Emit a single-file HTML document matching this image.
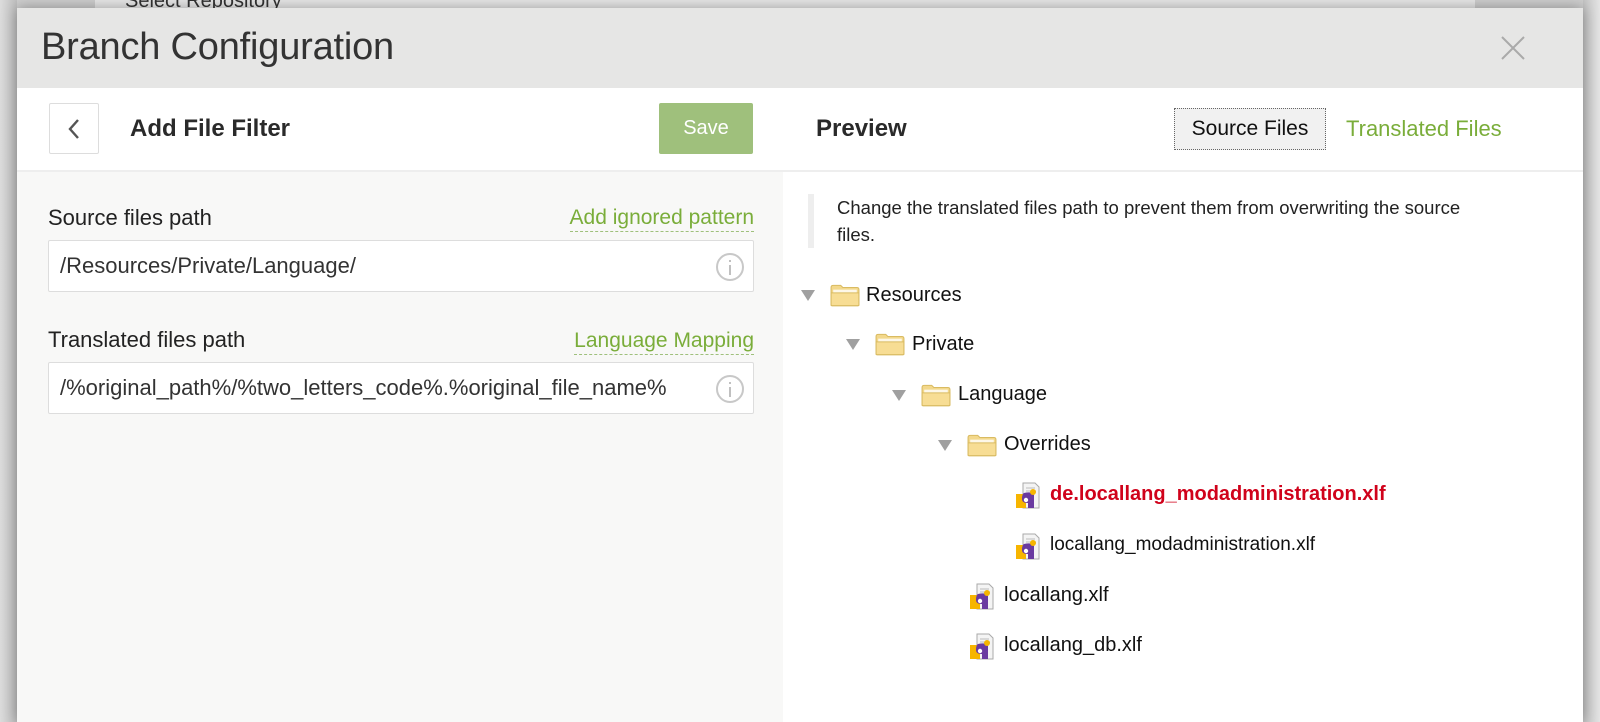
<!DOCTYPE html>
<html><head><meta charset="utf-8"><style>
*{box-sizing:border-box;margin:0;padding:0}
body{width:1600px;height:722px;overflow:hidden;background:#cfcfcf;font-family:"Liberation Sans","DejaVu Sans",sans-serif;color:#222;position:relative}
.back{position:absolute;left:95px;top:-20px;width:1380px;height:60px;background:#e9e9e9;}
.back span{position:absolute;left:30px;top:10px;font-size:20px;color:#333}
.edgeL{position:absolute;left:0;top:0;width:17px;height:722px;background:linear-gradient(90deg,#dcdcdc,#c0c0c0)}
.edgeR{position:absolute;right:0;top:0;width:17px;height:722px;background:linear-gradient(270deg,#e4e4e4,#c4c4c4)}
.modal{position:absolute;left:17px;top:8px;width:1566px;height:714px;background:#fff;box-shadow:0 0 14px rgba(0,0,0,.35)}
.hdr{position:absolute;left:0;top:0;width:100%;height:80px;background:#e6e6e5}
.hdr h1{position:absolute;left:24px;top:18px;font-weight:300;font-size:38px;color:#333;letter-spacing:-.2px}
.close{position:absolute;right:58px;top:28px}
.bar{position:absolute;left:0;top:80px;width:100%;height:84px;background:#fff;border-bottom:2px solid #eee}
.backbtn{position:absolute;left:32px;top:15px;width:50px;height:51px;border:1px solid #ddd;border-radius:2px;background:#fff}
.t1{position:absolute;left:113px;top:27px;font-size:24px;font-weight:bold;color:#2a2a2a}
.save{position:absolute;left:642px;top:15px;width:94px;height:51px;background:#9fc07c;color:#fff;font-size:20px;text-align:center;line-height:51px;border-radius:2px}
.prev{position:absolute;left:799px;top:27px;font-size:24px;font-weight:bold;color:#2a2a2a}
.src{position:absolute;left:1157px;top:20px;width:152px;height:42px;background:#f1f1f1;border:1px dotted #666;font-size:21px;text-align:center;line-height:40px;color:#111}
.trn{position:absolute;left:1329px;top:28px;font-size:22px;color:#7aad3a}
.left{position:absolute;left:0;top:164px;width:766px;height:550px;background:#f8f8f7}
.lbl{position:absolute;left:31px;font-size:22px;color:#222}
.lnk{position:absolute;right:29px;font-size:21px;color:#7aad3a;border-bottom:1px dashed #9fc07c;padding-bottom:1px}
.inp{position:absolute;left:31px;width:706px;height:52px;background:#fff;border:1px solid #ddd;border-radius:2px;font-size:22px;line-height:50px;padding-left:11px;color:#333}
.info{position:absolute;right:9px;top:12px;width:28px;height:28px;border:2px solid #c8c8c8;border-radius:50%}
.info:before{content:"";position:absolute;left:11px;top:5px;width:2px;height:2px;background:#c0c0c0}
.info:after{content:"";position:absolute;left:11px;top:10px;width:2px;height:10px;background:#c0c0c0}
.note{position:absolute;left:791px;top:186px;width:700px;border-left:6px solid #eee;padding-left:23px;padding-right:20px;font-size:18.5px;line-height:27px;color:#222}
.row{position:absolute;font-size:20px;color:#111;height:30px;line-height:30px;white-space:nowrap}
.tri{position:absolute;width:0;height:0;border-left:7px solid transparent;border-right:7px solid transparent;border-top:11px solid #a0a0a0}
.fold{position:absolute;width:30px;height:24px}
.fi{position:absolute;width:26px;height:28px}
</style></head><body>
<div class="back"><span>Select Repository</span></div>
<div class="edgeL"></div><div class="edgeR"></div>
<div class="modal">
 <div class="hdr"><h1>Branch Configuration</h1>
  <svg class="close" width="24" height="24" viewBox="0 0 24 24"><path d="M1 1L23 23M23 1L1 23" stroke="#aaa" stroke-width="2"/></svg></div>
 <div class="bar">
  <div class="backbtn"><svg width="50" height="51" viewBox="0 0 50 51"><path d="M28 16L20 25L28 34" fill="none" stroke="#555" stroke-width="2.4"/></svg></div>
  <div class="t1">Add File Filter</div>
  <div class="save">Save</div>
  <div class="prev">Preview</div>
  <div class="src">Source Files</div>
  <div class="trn">Translated Files</div>
 </div>
 <div class="left">
  <div class="lbl" style="top:33px">Source files path</div>
  <div class="lnk" style="top:34px">Add ignored pattern</div>
  <div class="inp" style="top:68px">/Resources/Private/Language/<div class="info"></div></div>
  <div class="lbl" style="top:155px">Translated files path</div>
  <div class="lnk" style="top:157px">Language Mapping</div>
  <div class="inp" style="top:190px">/%original_path%/%two_letters_code%.%original_file_name%<div class="info"></div></div>
 </div>
 <div class="note">Change the translated files path to prevent them from overwriting the source files.</div>
</div>
<svg width="0" height="0" style="position:absolute"><defs>
<symbol id="fd" viewBox="0 0 28 22"><path d="M1 4Q1 2 3 2H10L12 4H25Q27 4 27 6V20Q27 21 26 21H2Q1 21 1 20Z" fill="#f3d88b" stroke="#d9bb62"/><rect x="3" y="6" width="22" height="3" fill="#fff" opacity=".8"/><path d="M1 9H27V20Q27 21 26 21H2Q1 21 1 20Z" fill="#f7dd94" stroke="#d9bb62"/></symbol>
<symbol id="fl" viewBox="0 0 26 28"><path d="M8 2H20L24 6V27H8Z" fill="#f4f4f4" stroke="#aaa"/><path d="M11 7H20M11 10H21" stroke="#bbb"/><rect x="1" y="13" width="10" height="14" fill="#f7b500"/><path d="M9 12Q17 10 19 14V27H13V22Q7 22 7 18Q7 13 9 12Z" fill="#6a3aa0"/><circle cx="11" cy="19" r="2.2" fill="#fff"/><circle cx="18" cy="11" r="3" fill="#f7b500"/></symbol>
</defs></svg>
<div class="tri" style="left:801px;top:290px"></div><svg class="fold" style="left:830px;top:283px"><use href="#fd"/></svg><div class="row" style="left:866px;top:280px">Resources</div>
<div class="tri" style="left:846px;top:339px"></div><svg class="fold" style="left:875px;top:332px"><use href="#fd"/></svg><div class="row" style="left:912px;top:329px">Private</div>
<div class="tri" style="left:892px;top:390px"></div><svg class="fold" style="left:921px;top:383px"><use href="#fd"/></svg><div class="row" style="left:958px;top:379px">Language</div>
<div class="tri" style="left:938px;top:440px"></div><svg class="fold" style="left:967px;top:433px"><use href="#fd"/></svg><div class="row" style="left:1004px;top:429px">Overrides</div>
<svg class="fi" style="left:1015px;top:481px"><use href="#fl"/></svg><div class="row" style="left:1050px;top:479px;color:#d0021b;font-weight:bold;font-size:20px">de.locallang_modadministration.xlf</div>
<svg class="fi" style="left:1015px;top:532px"><use href="#fl"/></svg><div class="row" style="left:1050px;top:530px;font-size:19px">locallang_modadministration.xlf</div>
<svg class="fi" style="left:969px;top:582px"><use href="#fl"/></svg><div class="row" style="left:1004px;top:580px">locallang.xlf</div>
<svg class="fi" style="left:969px;top:632px"><use href="#fl"/></svg><div class="row" style="left:1004px;top:630px">locallang_db.xlf</div>
</body></html>
